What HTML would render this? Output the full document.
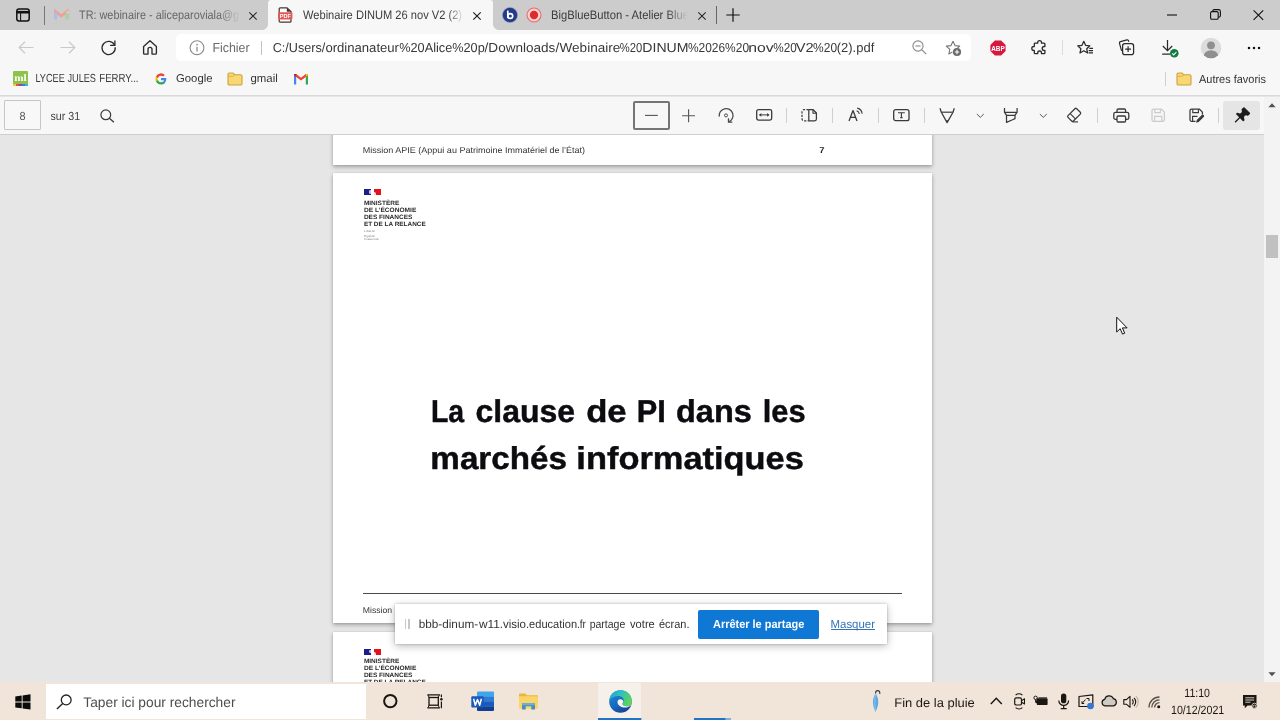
<!DOCTYPE html>
<html><head><meta charset="utf-8"><title>Webinaire DINUM 26 nov V2 (2).pdf</title>
<style>
*{box-sizing:border-box;margin:0;padding:0}
html,body{width:1280px;height:720px;overflow:hidden;background:#e6e6e6;font-family:"Liberation Sans",sans-serif;color:#222}
.abs{position:absolute}
svg{overflow:visible;will-change:transform}
#tabbar{position:absolute;left:0;top:0;width:1280px;height:30px;background:#cccccc}
#navbar{position:absolute;left:0;top:30px;width:1280px;height:36px;background:#f7f7f7}
#bookbar{position:absolute;left:0;top:66px;width:1280px;height:30.300px;background:#f7f7f7;border-bottom:1.300px solid #dadada}
#pdfbar{position:absolute;left:0;top:96.500px;width:1264px;height:38px;background:#f7f7f7;border-bottom:1px solid #cfcfcf}
#content{position:absolute;left:0;top:134.500px;width:1264px;height:547.500px;background:#e6e6e6;overflow:hidden}
#scroll{position:absolute;left:1264px;top:96.500px;width:16px;height:585.500px;background:#f3f3f3}
#taskbar{position:absolute;left:0;top:682px;width:1280px;height:38px;background:#f0e5d8}
.tx{overflow:visible;will-change:transform}
.tx text{font-family:"Liberation Sans",sans-serif;text-rendering:geometricPrecision;white-space:pre}
</style></head><body>
<div id="tabbar"></div>
<div class="abs" style="left:268px;top:0;width:225px;height:31px;background:#f7f7f7;border-radius:3px 3px 0 0"></div>
<div class="abs" style="left:262px;top:24px;width:6px;height:6px;background:radial-gradient(circle at 0 0,#cccccc 5.5px,#f7f7f7 6.5px)"></div>
<div class="abs" style="left:493px;top:24px;width:6px;height:6px;background:radial-gradient(circle at 100% 0,#cccccc 5.5px,#f7f7f7 6.5px)"></div>
<svg class="abs" style="left:15px;top:7px;" width="16" height="16" viewBox="0 0 16 16" fill="none"><rect x="1.8" y="2" width="12.4" height="12" rx="2.2" stroke="#111" stroke-width="1.5"/><path d="M1.8 5.2H14.2" stroke="#111" stroke-width="2.6"/><path d="M5.6 5V14" stroke="#1a1a1a" stroke-width="1.100"/></svg>
<div class="abs" style="left:44px;top:6px;width:1px;height:19px;background:#777"></div>
<svg class="abs" style="left:54px;top:9px;" width="15" height="11" viewBox="0 0 15 11" fill="none"><path d="M1.500 10.200V2.500L7.300 7 13.100 2.500V10.200" stroke="#eaa39c" stroke-width="2.900" fill="none"/><path d="M1.500 10.200V3.600" stroke="#a6c1ee" stroke-width="2.900"/><path d="M13.100 10.200V3.600" stroke="#a3d4b0" stroke-width="2.900"/><path d="M11.700 3.800L14.500 1.600V4z" fill="#f3dc9c"/></svg>
<div class="abs" style="left:79px;top:6px;width:163px;height:18px;overflow:hidden;-webkit-mask-image:linear-gradient(90deg,#000 86%,transparent 99%)"><svg class="abs tx" style="left:0px;top:-3px;" width="208" height="23"><text x="0.00" y="15.80" font-size="12.3" fill="#666" textLength="203.58" lengthAdjust="spacingAndGlyphs">TR: webinaire - aliceparoviala@gmail.com</text></svg></div>
<svg class="abs" style="left:248px;top:11px;" width="10" height="10" viewBox="0 0 10 10" fill="none"><path d="M1.3 1.3L8.7 8.7M8.7 1.3L1.3 8.7" stroke="#2a2a2a" stroke-width="1.100"/></svg>
<svg class="abs" style="left:278px;top:7px;" width="15" height="16" viewBox="0 0 15 16" fill="none"><path d="M2.200 .800H9l4 3.700V14.200a1 1 0 0 1-1 1H2.200a1 1 0 0 1-1-1V1.800a1 1 0 0 1 1-1z" fill="#fff" stroke="#4a3232" stroke-width="1.200"/><path d="M8.800 .900L13 4.700H8.800z" fill="#4a3232"/><rect x=".100" y="5.200" width="14.300" height="7.200" rx="1.300" fill="#df5855"/><text x="7.250" y="10.900" font-family="Liberation Sans" font-weight="700" font-size="5.600" fill="#fff" text-anchor="middle" textLength="11" lengthAdjust="spacingAndGlyphs">PDF</text></svg>
<div class="abs" style="left:303px;top:6px;width:161px;height:18px;overflow:hidden;-webkit-mask-image:linear-gradient(90deg,#000 90%,transparent 100%)"><svg class="abs tx" style="left:0px;top:-3px;" width="182" height="23"><text x="0.00" y="15.60" font-size="12.3" fill="#3c3c3c" textLength="177.58" lengthAdjust="spacingAndGlyphs">Webinaire DINUM 26 nov V2 (2).pdf</text></svg></div>
<svg class="abs" style="left:472px;top:11px;" width="10" height="10" viewBox="0 0 10 10" fill="none"><path d="M1.3 1.3L8.7 8.7M8.7 1.3L1.3 8.7" stroke="#1a1a1a" stroke-width="1.100"/></svg>
<svg class="abs" style="left:502px;top:7px;" width="16" height="16" viewBox="0 0 16 16" fill="none"><circle cx="8" cy="8" r="7.6" fill="#233a8a"/><circle cx="8" cy="8" r="7.6" stroke="#9aa3c6" stroke-width=".6"/><path d="M5.8 3.6V11.2" stroke="#fff" stroke-width="1.7"/><circle cx="8.3" cy="9" r="2.4" stroke="#fff" stroke-width="1.6"/></svg>
<svg class="abs" style="left:526px;top:7px;" width="16" height="16" viewBox="0 0 16 16" fill="none"><circle cx="8" cy="8" r="7" fill="#f6d3d3" stroke="#e86d6d" stroke-width="1.1"/><circle cx="8" cy="8" r="4.2" fill="#e02b2b"/></svg>
<div class="abs" style="left:551px;top:6px;width:138px;height:18px;overflow:hidden;-webkit-mask-image:linear-gradient(90deg,#000 84%,transparent 99%)"><svg class="abs tx" style="left:0px;top:-3px;" width="175" height="23"><text x="0.00" y="15.80" font-size="12.3" fill="#3a3a3a" textLength="170.43" lengthAdjust="spacingAndGlyphs">BigBlueButton - Atelier BlueButton</text></svg></div>
<svg class="abs" style="left:697px;top:11px;" width="10" height="10" viewBox="0 0 10 10" fill="none"><path d="M1.3 1.3L8.7 8.7M8.7 1.3L1.3 8.7" stroke="#2a2a2a" stroke-width="1.100"/></svg>
<div class="abs" style="left:716px;top:6px;width:1px;height:18px;background:#666"></div>
<svg class="abs" style="left:726px;top:8px;" width="14" height="14" viewBox="0 0 14 14" fill="none"><path d="M7 0.3V13.7M0.3 7H13.7" stroke="#111" stroke-width="1.2"/></svg>
<svg class="abs" style="left:1167px;top:14px;" width="10" height="2" viewBox="0 0 10 2" fill="none"><path d="M0 1H10" stroke="#111" stroke-width="1.1"/></svg>
<svg class="abs" style="left:1210px;top:9px;" width="11" height="11" viewBox="0 0 11 11" fill="none"><rect x=".6" y="2.6" width="7.6" height="7.6" rx="1.3" stroke="#111" stroke-width="1.1"/><path d="M2.8 2.4V2a1.4 1.4 0 0 1 1.4-1.4H8.6A1.8 1.8 0 0 1 10.4 2.4V6.6A1.4 1.4 0 0 1 9 8H8.4" stroke="#111" stroke-width="1.1"/></svg>
<svg class="abs" style="left:1253px;top:10px;" width="11" height="10" viewBox="0 0 11 10" fill="none"><path d="M.6.4L10.2 9.8M10.2.4L.6 9.8" stroke="#111" stroke-width="1.1"/></svg>
<div id="navbar"></div>
<svg class="abs" style="left:18px;top:41px;" width="16" height="13" viewBox="0 0 16 13" fill="none"><path d="M15.5 6.5H1.2M7 .8L1.2 6.5 7 12.2" stroke="#c9c9c9" stroke-width="1.2"/></svg>
<svg class="abs" style="left:60px;top:41px;" width="16" height="13" viewBox="0 0 16 13" fill="none"><path d="M.5 6.5H14.8M9 .8L14.8 6.5 9 12.2" stroke="#c9c9c9" stroke-width="1.2"/></svg>
<svg class="abs" style="left:100px;top:39px;" width="17" height="17" viewBox="0 0 17 17" fill="none"><path d="M14.500 5.900A6.600 6.600 0 1 0 15.200 8.200" stroke="#2b2b2b" stroke-width="1.3"/><path d="M14.9 1.6V6.4H10.1" stroke="#2b2b2b" stroke-width="1.3"/></svg>
<svg class="abs" style="left:142px;top:39px;" width="16" height="17" viewBox="0 0 16 17" fill="none"><path d="M1.6 7.6L8 1.7l6.4 5.9V14.2a.9.9 0 0 1-.9.9H10V10.3a2 2 0 0 0-4 0v4.8H2.5a.9.9 0 0 1-.9-.9z" stroke="#2b2b2b" stroke-width="1.35" stroke-linejoin="round"/></svg>
<div class="abs" style="left:176px;top:34px;width:795px;height:27px;background:#fff;border-radius:5px"></div>
<svg class="abs" style="left:189px;top:40px;" width="16" height="16" viewBox="0 0 16 16" fill="none"><circle cx="8" cy="7.7" r="6.9" stroke="#8b8b8b" stroke-width="1.1"/><path d="M8 6.8V11.4" stroke="#8b8b8b" stroke-width="1.3"/><circle cx="8" cy="4.6" r=".9" fill="#8b8b8b"/></svg>
<svg class="abs tx" style="left:212px;top:37px;" width="42" height="24"><text x="0.50" y="15.00" font-size="13" fill="#6a6a6a" textLength="37.10" lengthAdjust="spacingAndGlyphs">Fichier</text></svg>
<div class="abs" style="left:260.5px;top:41px;width:1.2px;height:14px;background:#c4c4c4"></div>
<svg class="abs tx" style="left:272px;top:37px;" width="58" height="24"><text x="0.67" y="15.00" font-size="13" fill="#383838" textLength="52.55" lengthAdjust="spacingAndGlyphs">C:/Users/</text></svg>
<svg class="abs tx" style="left:325px;top:37px;" width="78" height="24"><text x="0.43" y="15.00" font-size="13" fill="#383838" textLength="73.54" lengthAdjust="spacingAndGlyphs">ordinanateur</text></svg>
<svg class="abs tx" style="left:399px;top:37px;" width="90" height="24"><text x="0.26" y="15.00" font-size="13" fill="#383838" textLength="85.46" lengthAdjust="spacingAndGlyphs">%20Alice%20p</text></svg>
<svg class="abs tx" style="left:484px;top:37px;" width="80" height="24"><text x="0.62" y="15.00" font-size="13" fill="#383838" textLength="74.55" lengthAdjust="spacingAndGlyphs">/Downloads/</text></svg>
<svg class="abs tx" style="left:559px;top:37px;" width="66" height="24"><text x="0.53" y="15.00" font-size="13" fill="#383838" textLength="60.81" lengthAdjust="spacingAndGlyphs">Webinaire</text></svg>
<svg class="abs tx" style="left:619px;top:37px;" width="28" height="24"><text x="0.80" y="15.00" font-size="13" fill="#383838" textLength="22.44" lengthAdjust="spacingAndGlyphs">%20</text></svg>
<svg class="abs tx" style="left:642px;top:37px;" width="51" height="24"><text x="0.34" y="15.00" font-size="13" fill="#383838" textLength="46.15" lengthAdjust="spacingAndGlyphs">DINUM</text></svg>
<svg class="abs tx" style="left:687px;top:37px;" width="67" height="24"><text x="0.92" y="15.00" font-size="13" fill="#383838" textLength="61.12" lengthAdjust="spacingAndGlyphs">%2026%20</text></svg>
<svg class="abs tx" style="left:748px;top:37px;" width="30" height="24"><text x="0.21" y="15.00" font-size="13" fill="#383838" textLength="25.43" lengthAdjust="spacingAndGlyphs">nov</text></svg>
<svg class="abs tx" style="left:773px;top:37px;" width="28" height="24"><text x="0.35" y="15.00" font-size="13" fill="#383838" textLength="23.44" lengthAdjust="spacingAndGlyphs">%20</text></svg>
<svg class="abs tx" style="left:795px;top:37px;" width="23" height="24"><text x="0.80" y="15.00" font-size="13" fill="#383838" textLength="17.91" lengthAdjust="spacingAndGlyphs">V2</text></svg>
<svg class="abs tx" style="left:813px;top:37px;" width="29" height="24"><text x="0.11" y="15.00" font-size="13" fill="#383838" textLength="23.93" lengthAdjust="spacingAndGlyphs">%20</text></svg>
<svg class="abs tx" style="left:836px;top:37px;" width="43" height="24"><text x="0.74" y="15.00" font-size="13" fill="#383838" textLength="37.53" lengthAdjust="spacingAndGlyphs">(2).pdf</text></svg>
<svg class="abs" style="left:912px;top:40px;" width="15" height="15" viewBox="0 0 15 15" fill="none"><circle cx="6" cy="6" r="5.1" stroke="#8a8a8a" stroke-width="1.1"/><path d="M3.4 6H8.6" stroke="#8a8a8a" stroke-width="1.1"/><path d="M9.7 9.7L14.2 14.2" stroke="#8a8a8a" stroke-width="1.2"/></svg>
<svg class="abs" style="left:945px;top:40px;" width="17" height="17" viewBox="0 0 17 17" fill="none"><path d="M8 1.2l2 4.4 4.7.5-3.5 3.2.3 1" stroke="#777" stroke-width="1.1" stroke-linejoin="round"/><path d="M8 1.2L6 5.6l-4.7.5 3.5 3.2-1 4.7 3.6-2.1" stroke="#777" stroke-width="1.1" stroke-linejoin="round"/><circle cx="12" cy="12" r="4.1" fill="#6b6b6b"/><path d="M12 9.8v4.4M9.8 12h4.4" stroke="#fff" stroke-width="1.1"/></svg>
<svg class="abs" style="left:990px;top:40px;" width="16" height="16" viewBox="0 0 16 16" fill="none"><path d="M4.9.4h6.2l4.5 4.5v6.2l-4.5 4.5H4.9L.4 11.100V4.9z" fill="#d8173f"/><text x="8" y="10.700" font-family="Liberation Sans" font-weight="700" font-size="7.200" fill="#fff" text-anchor="middle" textLength="13.500" lengthAdjust="spacingAndGlyphs">ABP</text></svg>
<svg class="abs" style="left:1031px;top:39px;" width="16" height="17" viewBox="0 0 16 17" fill="none"><path d="M6.2 3.2a1.9 1.9 0 0 1 3.800 0v.7h2.600a.8.8 0 0 1 .8.8v2.500h-.8a1.900 1.900 0 0 0 0 3.800h.8v2.600a.8.8 0 0 1-.8.8H10v-.8a1.900 1.900 0 0 0-3.800 0v.8H3.600a.8.8 0 0 1-.8-.8V11h-.6a1.900 1.900 0 0 1 0-3.800h.6V4.700a.8.800 0 0 1 .8-.8h2.600z" stroke="#2b2b2b" stroke-width="1.300" stroke-linejoin="round" transform="translate(.5 .3)"/></svg>
<div class="abs" style="left:1061.500px;top:40px;width:1px;height:15px;background:#dcdcdc"></div>
<svg class="abs" style="left:1077px;top:40px;" width="17" height="16" viewBox="0 0 17 16" fill="none"><path d="M6.800 1.300l1.800 4 4.300.5-3.200 2.900.9 4.300-3.800-2.200-3.800 2.200.900-4.300L.7 5.800l4.300-.5z" stroke="#2b2b2b" stroke-width="1.250" stroke-linejoin="round"/><path d="M12.300 8.300H16M11.700 10.600H16M11.700 12.900H16" stroke="#2b2b2b" stroke-width="1.200"/></svg>
<svg class="abs" style="left:1118px;top:39px;" width="17" height="17" viewBox="0 0 17 17" fill="none"><path d="M3.600 11.800L1.500 4.300a1.400 1.400 0 0 1 1-1.700l6.400-1.700a1.400 1.400 0 0 1 1.700 1l.2.900" stroke="#2b2b2b" stroke-width="1.200"/><rect x="4.600" y="4.700" width="11" height="11" rx="2.200" stroke="#2b2b2b" stroke-width="1.250"/><path d="M10.100 7.300v5.800M7.200 10.200H13" stroke="#2b2b2b" stroke-width="1.200"/></svg>
<svg class="abs" style="left:1161px;top:39px;" width="20" height="19" viewBox="0 0 20 19" fill="none"><path d="M6.500 1v10.500M1.800 7l4.700 4.600L11.200 7M1.200 15h8" stroke="#2b2b2b" stroke-width="1.250"/><circle cx="13.300" cy="14.300" r="4.300" fill="#107c41"/><path d="M11.200 14.400l1.500 1.500 2.700-2.900" stroke="#fff" stroke-width="1.100"/></svg>
<svg class="abs" style="left:1200px;top:37px;" width="22" height="22" viewBox="0 0 22 22" fill="none"><defs><clipPath id="pc"><circle cx="11" cy="11" r="10.300"/></clipPath></defs><circle cx="11" cy="11" r="10.300" fill="#dcdcdc"/><g clip-path="url(#pc)"><circle cx="11" cy="8.300" r="3.900" fill="#8f8f8f"/><ellipse cx="11" cy="18.500" rx="7" ry="5.300" fill="#8f8f8f"/></g></svg>
<svg class="abs" style="left:1247px;top:46px;" width="14" height="4" viewBox="0 0 14 4" fill="none"><circle cx="2" cy="2" r="1.250" fill="#111"/><circle cx="7" cy="2" r="1.250" fill="#111"/><circle cx="12" cy="2" r="1.250" fill="#111"/></svg>
<div id="bookbar"></div>
<div class="abs" style="left:13px;top:71px;width:15px;height:15px;background:#8fc24b;border-radius:1px;overflow:hidden"><div style="position:absolute;left:0;bottom:0;width:15px;height:2.500px;background:linear-gradient(90deg,#f5c93a 0 20%,#e8532f 20% 40%,#8a4ab0 40% 60%,#3b7fd9 60% 80%,#35b8c9 80%)"></div></div>
<svg class="abs tx" style="left:14px;top:69px;" width="17" height="19"><text x="0.30" y="12.30" font-size="9.8" fill="#fff" font-weight="700" style="font-family:'Liberation Serif',serif" textLength="12.40" lengthAdjust="spacingAndGlyphs">ml</text></svg>
<svg class="abs tx" style="left:35px;top:68px;" width="34" height="22"><text x="0.45" y="14.40" font-size="11.7" fill="#3a3a3a" textLength="29.31" lengthAdjust="spacingAndGlyphs">LYCEE</text></svg>
<svg class="abs tx" style="left:67px;top:68px;" width="33" height="22"><text x="0.47" y="14.40" font-size="11.7" fill="#3a3a3a" textLength="28.50" lengthAdjust="spacingAndGlyphs">JULES</text></svg>
<svg class="abs tx" style="left:99px;top:68px;" width="44" height="22"><text x="0.25" y="14.40" font-size="11.7" fill="#3a3a3a" textLength="39.29" lengthAdjust="spacingAndGlyphs">FERRY...</text></svg>
<svg class="abs" style="left:155px;top:73px;" width="12" height="12" viewBox="0 0 12 12" fill="none"><path d="M11.300 6.100c0-.4 0-.8-.1-1.100H6v2.200h3a2.600 2.600 0 0 1-1.100 1.700v1.400h1.800a5.500 5.500 0 0 0 1.600-4.200z" fill="#4285f4"/><path d="M6 11.500c1.500 0 2.800-.5 3.700-1.300L7.900 8.800c-.5.300-1.100.5-1.900.5a3.300 3.300 0 0 1-3.100-2.300H1v1.500A5.500 5.500 0 0 0 6 11.500z" fill="#34a853"/><path d="M2.900 7a3.300 3.300 0 0 1 0-2.100V3.400H1a5.500 5.500 0 0 0 0 5z" fill="#fbbc05"/><path d="M6 2.700c.8 0 1.600.3 2.200.8l1.600-1.600A5.500 5.500 0 0 0 1 3.400l1.900 1.500A3.300 3.300 0 0 1 6 2.700z" fill="#ea4335"/></svg>
<svg class="abs tx" style="left:176px;top:68px;" width="41" height="21"><text x="0.00" y="14.40" font-size="11.3" fill="#333" textLength="36.50" lengthAdjust="spacingAndGlyphs">Google</text></svg>
<svg class="abs" style="left:227px;top:71.5px;" width="16" height="14" viewBox="0 0 16 14" fill="none"><path d="M1 2.300a1.300 1.300 0 0 1 1.300-1.300H6l1.600 1.700H13.700A1.300 1.300 0 0 1 15 4v7.700A1.300 1.300 0 0 1 13.700 13H2.300A1.300 1.300 0 0 1 1 11.700z" fill="#f7d875" stroke="#cfa236" stroke-width="1.100"/><path d="M1.200 4.300H6.300L7.700 2.800" stroke="#d9a93a" stroke-width=".8"/></svg>
<svg class="abs tx" style="left:250px;top:68px;" width="32" height="21"><text x="0.50" y="14.40" font-size="11.3" fill="#333" textLength="27.30" lengthAdjust="spacingAndGlyphs">gmail</text></svg>
<svg class="abs" style="left:293.5px;top:73.5px;" width="14" height="10.5" viewBox="0 0 14 10.5" fill="none"><path d="M0 10.500V1.200L2.200 0v10.500z" fill="#4285f4"/><path d="M14 10.500V1.200L11.800 0v10.500z" fill="#34a853"/><path d="M0 1.200L7 6.500 14 1.200V0l-2.200 0L7 3.700 2.200 0H0z" fill="#ea4335"/><path d="M0 1.200V0h2.200v2.900z" fill="#c5221f"/><path d="M14 1.200V0h-2.200v2.900z" fill="#fbbc04"/></svg>
<div class="abs" style="left:1165px;top:71.500px;width:1px;height:14px;background:#cfcfcf"></div>
<svg class="abs" style="left:1175.5px;top:71.5px;" width="16" height="14" viewBox="0 0 16 14" fill="none"><path d="M1 2.300a1.300 1.300 0 0 1 1.300-1.300H6l1.600 1.700H13.700A1.300 1.300 0 0 1 15 4v7.700A1.300 1.300 0 0 1 13.700 13H2.300A1.300 1.300 0 0 1 1 11.700z" fill="#f7d875" stroke="#cfa236" stroke-width="1.100"/><path d="M1.200 4.300H6.300L7.700 2.800" stroke="#d9a93a" stroke-width=".8"/></svg>
<svg class="abs tx" style="left:1199px;top:68px;" width="71" height="22"><text x="0.00" y="14.60" font-size="11.5" fill="#333" textLength="67.00" lengthAdjust="spacingAndGlyphs">Autres favoris</text></svg>
<div id="pdfbar"></div>
<div class="abs" style="left:4px;top:100px;width:36.500px;height:29.500px;border:1px solid #c6c6c6;border-radius:1px;background:#f8f8f8"></div>
<svg class="abs tx" style="left:19px;top:105px;" width="11" height="22"><text x="0.60" y="14.90" font-size="11.7" fill="#555" textLength="6.10" lengthAdjust="spacingAndGlyphs">8</text></svg>
<svg class="abs tx" style="left:50px;top:105px;" width="35" height="22"><text x="0.50" y="14.90" font-size="11.7" fill="#444" textLength="29.70" lengthAdjust="spacingAndGlyphs">sur 31</text></svg>
<svg class="abs" style="left:99.5px;top:108.5px;" width="15" height="14" viewBox="0 0 15 14" fill="none"><circle cx="5.800" cy="5.800" r="4.900" stroke="#3a3a3a" stroke-width="1.200"/><path d="M9.400 9.300L13.900 13.300" stroke="#3a3a3a" stroke-width="1.300"/></svg>
<div class="abs" style="left:633px;top:101px;width:36.500px;height:28.500px;border:2px solid #757575;border-radius:2px"></div>
<svg class="abs" style="left:645px;top:114px;" width="13" height="3" viewBox="0 0 13 3" fill="none"><path d="M0 1.400H12.800" stroke="#555" stroke-width="1.100"/></svg>
<svg class="abs" style="left:682px;top:108.5px;" width="14" height="14" viewBox="0 0 14 14" fill="none"><path d="M6.600 .300V13.200M.100 6.800H13" stroke="#555" stroke-width="1.100"/></svg>
<svg class="abs" style="left:718px;top:107px;" width="17" height="17" viewBox="0 0 17 17" fill="none"><path d="M1.300 9.600A6.900 6.900 0 1 1 10.900 14.800" stroke="#4a4a4a" stroke-width="1.250"/><path d="M10.500 11.300V15.200H14.300" stroke="#4a4a4a" stroke-width="1.300"/><circle cx="8" cy="8.400" r="1.500" stroke="#4a4a4a" stroke-width="1"/></svg>
<svg class="abs" style="left:756px;top:109px;" width="17" height="12" viewBox="0 0 17 12" fill="none"><rect x=".700" y=".700" width="15" height="10.400" rx="1.800" stroke="#3a3a3a" stroke-width="1.300"/><path d="M3.300 5.900H13.100" stroke="#3a3a3a" stroke-width="1"/><path d="M5.300 4l-2.200 1.900 2.200 1.900zM11.100 4l2.200 1.900-2.200 1.900z" fill="#3a3a3a"/></svg>
<div class="abs" style="left:786px;top:108px;width:1px;height:15px;background:#cfcfcf"></div>
<div class="abs" style="left:832.3px;top:108px;width:1px;height:15px;background:#cfcfcf"></div>
<div class="abs" style="left:878.3px;top:108px;width:1px;height:15px;background:#cfcfcf"></div>
<div class="abs" style="left:924.3px;top:108px;width:1px;height:15px;background:#cfcfcf"></div>
<div class="abs" style="left:1097.3px;top:108px;width:1px;height:15px;background:#cfcfcf"></div>
<div class="abs" style="left:1218px;top:108px;width:1px;height:15px;background:#cfcfcf"></div>
<svg class="abs" style="left:801px;top:109px;" width="17" height="13" viewBox="0 0 17 13" fill="none"><path d="M7.600 .700H3A2 2 0 0 0 1 2.700V9.800a2 2 0 0 0 2 2H7.600" stroke="#3a3a3a" stroke-width="1.200" stroke-dasharray="2.200 1.300"/><path d="M7.800 .700h4.400l3.200 3.300v6a1.800 1.800 0 0 1-1.800 1.800H7.800z" stroke="#3a3a3a" stroke-width="1.250" stroke-linejoin="round"/><path d="M12 .900V4.200H15.200" stroke="#3a3a3a" stroke-width="1.100"/></svg>
<svg class="abs" style="left:848px;top:107px;" width="17" height="15" viewBox="0 0 17 15" fill="none"><path d="M1 14L5 3.600 9 14M2.500 10.300H7.500" stroke="#3a3a3a" stroke-width="1.300" stroke-linejoin="round"/><path d="M8.600 3.800a3.600 3.600 0 0 1 2.700 3.200M9.200 1.100a6.200 6.200 0 0 1 4.900 5.600" stroke="#3a3a3a" stroke-width="1.100"/></svg>
<svg class="abs" style="left:893px;top:109px;" width="17" height="13" viewBox="0 0 17 13" fill="none"><rect x=".700" y=".700" width="15.300" height="11" rx="2" stroke="#3a3a3a" stroke-width="1.300"/><path d="M5 3.700H11.800M8.400 3.700V8.700M7 8.800H9.800" stroke="#3a3a3a" stroke-width="1.100"/></svg>
<svg class="abs" style="left:939px;top:107px;" width="17" height="17" viewBox="0 0 17 17" fill="none"><path d="M1 1.200L2.300 5.200 8.100 15.600 14 5.200 15.300 1.200" stroke="#3a3a3a" stroke-width="1.250" stroke-linejoin="round"/><path d="M2.400 5.200H13.900" stroke="#3a3a3a" stroke-width="1.200"/><path d="M6.900 13.300h2.400L8.100 15.600z" fill="#3a3a3a"/></svg>
<svg class="abs" style="left:975.5px;top:112.5px;" width="9" height="6" viewBox="0 0 9 6" fill="none"><path d="M.800 1L4.300 4.400 7.800 1" stroke="#555" stroke-width="1"/></svg>
<svg class="abs" style="left:1003px;top:107px;" width="16" height="17" viewBox="0 0 16 17" fill="none"><path d="M1.500 1V5.200L3.500 8.400V15.400L9.500 12.800 12 11.600V8.400L14.100 5.200V1" stroke="#3a3a3a" stroke-width="1.250" stroke-linejoin="round"/><path d="M1.800 5.300H13.900M3.500 8.400H12" stroke="#3a3a3a" stroke-width="1.150"/></svg>
<svg class="abs" style="left:1039px;top:112.5px;" width="9" height="6" viewBox="0 0 9 6" fill="none"><path d="M.800 1L4.300 4.400 7.800 1" stroke="#555" stroke-width="1"/></svg>
<svg class="abs" style="left:1066px;top:107px;" width="18" height="17" viewBox="0 0 18 17" fill="none"><path d="M10.300 1.500a1.300 1.300 0 0 1 1.800 0l3.600 3.600a1.300 1.300 0 0 1 0 1.800L8.800 13.800a1.300 1.300 0 0 1-1.800 0L3.400 10.200a1.300 1.300 0 0 1 0-1.800z" stroke="#3a3a3a" stroke-width="1.250" transform="translate(-1.400 .200)"/><path d="M4.500 6.900l4.900 4.900" stroke="#3a3a3a" stroke-width="1.150"/><path d="M6.300 14.900H12" stroke="#3a3a3a" stroke-width="1.150"/></svg>
<svg class="abs" style="left:1112.5px;top:107.5px;" width="17" height="15" viewBox="0 0 17 15" fill="none"><path d="M4 4.300V2.400A1.400 1.400 0 0 1 5.400 1H11.200A1.400 1.400 0 0 1 12.600 2.400V4.300" stroke="#3a3a3a" stroke-width="1.300"/><path d="M4 11.400H2.500A1.700 1.700 0 0 1 .800 9.700V6A1.700 1.700 0 0 1 2.500 4.300H14.100A1.700 1.700 0 0 1 15.800 6V9.700A1.700 1.700 0 0 1 14.100 11.400H12.600" stroke="#3a3a3a" stroke-width="1.300"/><rect x="4" y="8" width="8.600" height="6" rx="1.200" stroke="#3a3a3a" stroke-width="1.300"/></svg>
<svg class="abs" style="left:1151px;top:107.5px;" width="16" height="16" viewBox="0 0 16 16" fill="none"><path d="M1 2.600A1.600 1.600 0 0 1 2.600 1H10.300L13.400 4.100V11.800A1.600 1.600 0 0 1 11.800 13.400H2.600A1.600 1.600 0 0 1 1 11.800z" stroke="#cbcbcb" stroke-width="1.250" stroke-linejoin="round"/><path d="M3.800 1.200V4.600H9.400V1.200" stroke="#cbcbcb" stroke-width="1.150"/><path d="M3.600 13.200V8.300H10.800V13.200" stroke="#cbcbcb" stroke-width="1.150"/></svg>
<svg class="abs" style="left:1188.5px;top:107.5px;" width="16" height="16" viewBox="0 0 16 16" fill="none"><path d="M6.500 13.400H2.600A1.600 1.600 0 0 1 1 11.800V2.600A1.600 1.600 0 0 1 2.600 1H10.300L13.400 4.100V6.500" stroke="#3a3a3a" stroke-width="1.250" stroke-linejoin="round"/><path d="M3.800 1.200V4.600H9.400V1.200" stroke="#3a3a3a" stroke-width="1.150"/><path d="M3.600 13.200V8.300H8.500" stroke="#3a3a3a" stroke-width="1.150"/><path d="M7.100 14.700l.700-2.700 5-5a1.300 1.300 0 0 1 1.900 1.900l-5 5z" fill="#3a3a3a"/></svg>
<div class="abs" style="left:1223px;top:100.500px;width:37px;height:29px;background:#e5e5e5;border-radius:3px"></div>
<svg class="abs" style="left:1234px;top:106.5px;" width="16" height="16" viewBox="0 0 16 16" fill="none"><g transform="translate(1.100 15.200) rotate(-45)"><path d="M0 0H7" stroke="#1d1d1d" stroke-width="1.300"/><path d="M6.300 -4.800Q6.300 -5.300 6.900 -5.300H7.800Q8.400 -5.300 8.500 -4.700Q9.300 -2.400 11 -2.300Q12.800 -2.400 13.300 -4.100Q13.500 -4.600 14.100 -4.600H16.300Q17.100 -4.600 17.100 -3.800V3.800Q17.100 4.600 16.300 4.600H14.100Q13.500 4.600 13.300 4.100Q12.800 2.400 11 2.300Q9.300 2.400 8.500 4.700Q8.400 5.300 7.800 5.300H6.900Q6.300 5.300 6.300 4.800z" fill="#1d1d1d"/></g></svg>
<div id="content">
<div class="abs" style="left:333px;top:-10px;width:598.500px;height:40.600px;background:#fff;box-shadow:0 1.500px 4px rgba(0,0,0,.30),0 0 1px rgba(0,0,0,.2)"></div>
<div class="abs" style="left:333px;top:38.800px;width:598.500px;height:450px;background:#fff;box-shadow:0 1.500px 4px rgba(0,0,0,.30),0 0 1px rgba(0,0,0,.2)"></div>
<div class="abs" style="left:333px;top:497.800px;width:598.500px;height:100px;background:#fff;box-shadow:0 1.500px 4px rgba(0,0,0,.30),0 0 1px rgba(0,0,0,.2)"></div>
</div>
<svg class="abs tx" style="left:362px;top:142px;" width="227" height="17"><text x="0.80" y="11.10" font-size="8.5" fill="#333" textLength="222.20" lengthAdjust="spacingAndGlyphs">Mission APIE (Appui au Patrimoine Immatériel de l’État)</text></svg>
<svg class="abs tx" style="left:819px;top:142px;" width="10" height="17"><text x="0.30" y="11.10" font-size="8.5" fill="#222" font-weight="700" textLength="5.30" lengthAdjust="spacingAndGlyphs">7</text></svg>
<div class="abs" style="left:363.7px;top:189.2px;width:7.300px;height:6.300px;background:#1b1d8c"></div>
<div class="abs" style="left:373.9px;top:189.2px;width:7.300px;height:6.300px;background:#e1141d"></div>
<div class="abs" style="left:369.0px;top:190.39999999999998px;width:2.300px;height:3.400px;background:#fff;border-radius:1.200px 0 0 1.500px;opacity:.75"></div>
<div class="abs" style="left:373.4px;top:192.0px;width:3px;height:3.500px;background:#fff;border-radius:0 2px 0 0;opacity:.85"></div>
<svg class="abs tx" style="left:363px;top:196px;" width="41" height="14"><text x="0.90" y="9.10" font-size="6.3" fill="#2a2a2a" font-weight="700" textLength="35.40" lengthAdjust="spacingAndGlyphs">MINISTÈRE</text></svg>
<svg class="abs tx" style="left:363px;top:203px;" width="58" height="14"><text x="0.90" y="9.10" font-size="6.3" fill="#2a2a2a" font-weight="700" textLength="52.40" lengthAdjust="spacingAndGlyphs">DE L’ÉCONOMIE</text></svg>
<svg class="abs tx" style="left:363px;top:210px;" width="54" height="14"><text x="0.90" y="9.10" font-size="6.3" fill="#2a2a2a" font-weight="700" textLength="48.50" lengthAdjust="spacingAndGlyphs">DES FINANCES</text></svg>
<svg class="abs tx" style="left:363px;top:217px;" width="67" height="14"><text x="0.90" y="9.10" font-size="6.3" fill="#2a2a2a" font-weight="700" textLength="61.80" lengthAdjust="spacingAndGlyphs">ET DE LA RELANCE</text></svg>
<svg class="abs tx" style="left:364px;top:226px;" width="15" height="9"><text x="0.10" y="5.50" font-size="3.0" fill="#888" font-style="italic" textLength="10.50" lengthAdjust="spacingAndGlyphs">Liberté</text></svg>
<svg class="abs tx" style="left:364px;top:231px;" width="15" height="9"><text x="0.10" y="5.50" font-size="3.0" fill="#888" font-style="italic" textLength="10.50" lengthAdjust="spacingAndGlyphs">Égalité</text></svg>
<svg class="abs tx" style="left:364px;top:235px;" width="19" height="9"><text x="0.10" y="5.40" font-size="3.0" fill="#888" font-style="italic" textLength="14.50" lengthAdjust="spacingAndGlyphs">Fraternité</text></svg>
<svg class="abs tx" style="left:431px;top:388px;stroke:#0c0c10;stroke-width:.45px;" width="38" height="52"><text x="0.00" y="34.30" font-size="31.6" fill="#0c0c10" font-weight="700" textLength="33.16" lengthAdjust="spacingAndGlyphs">La</text></svg>
<svg class="abs tx" style="left:475px;top:388px;stroke:#0c0c10;stroke-width:.45px;" width="105" height="52"><text x="0.51" y="34.30" font-size="31.6" fill="#0c0c10" font-weight="700" textLength="99.64" lengthAdjust="spacingAndGlyphs">clause</text></svg>
<svg class="abs tx" style="left:586px;top:388px;stroke:#0c0c10;stroke-width:.45px;" width="45" height="52"><text x="0.17" y="34.30" font-size="31.6" fill="#0c0c10" font-weight="700" textLength="40.51" lengthAdjust="spacingAndGlyphs">de</text></svg>
<svg class="abs tx" style="left:636px;top:388px;stroke:#0c0c10;stroke-width:.45px;" width="34" height="52"><text x="0.65" y="34.30" font-size="31.6" fill="#0c0c10" font-weight="700" textLength="29.04" lengthAdjust="spacingAndGlyphs">PI</text></svg>
<svg class="abs tx" style="left:676px;top:388px;stroke:#0c0c10;stroke-width:.45px;" width="80" height="52"><text x="0.04" y="34.30" font-size="31.6" fill="#0c0c10" font-weight="700" textLength="75.79" lengthAdjust="spacingAndGlyphs">dans</text></svg>
<svg class="abs tx" style="left:762px;top:388px;stroke:#0c0c10;stroke-width:.45px;" width="48" height="52"><text x="0.71" y="34.30" font-size="31.6" fill="#0c0c10" font-weight="700" textLength="42.87" lengthAdjust="spacingAndGlyphs">les</text></svg>
<svg class="abs tx" style="left:430px;top:435px;stroke:#0c0c10;stroke-width:.45px;" width="141" height="52"><text x="0.37" y="34.30" font-size="31.6" fill="#0c0c10" font-weight="700" textLength="136.62" lengthAdjust="spacingAndGlyphs">marchés</text></svg>
<svg class="abs tx" style="left:576px;top:435px;stroke:#0c0c10;stroke-width:.45px;" width="232" height="52"><text x="0.35" y="34.30" font-size="31.6" fill="#0c0c10" font-weight="700" textLength="227.57" lengthAdjust="spacingAndGlyphs">informatiques</text></svg>
<div class="abs" style="left:363px;top:593px;width:538.500px;height:1.300px;background:#4a4a4a"></div>
<svg class="abs tx" style="left:362px;top:601px;" width="35" height="17"><text x="0.80" y="11.70" font-size="8.5" fill="#333" textLength="29.30" lengthAdjust="spacingAndGlyphs">Mission</text></svg>
<div class="abs" style="left:340px;top:640px;width:200px;height:43px;overflow:hidden"><div style="position:absolute;left:-340px;top:-640px"><div class="abs" style="left:363.7px;top:648.8px;width:7.300px;height:6.300px;background:#1b1d8c"></div>
<div class="abs" style="left:373.9px;top:648.8px;width:7.300px;height:6.300px;background:#e1141d"></div>
<div class="abs" style="left:369.0px;top:650.0px;width:2.300px;height:3.400px;background:#fff;border-radius:1.200px 0 0 1.500px;opacity:.75"></div>
<div class="abs" style="left:373.4px;top:651.5999999999999px;width:3px;height:3.500px;background:#fff;border-radius:0 2px 0 0;opacity:.85"></div>
<svg class="abs tx" style="left:363px;top:654px;" width="41" height="14"><text x="0.90" y="9.10" font-size="6.3" fill="#2a2a2a" font-weight="700" textLength="35.40" lengthAdjust="spacingAndGlyphs">MINISTÈRE</text></svg>
<svg class="abs tx" style="left:363px;top:661px;" width="58" height="14"><text x="0.90" y="9.10" font-size="6.3" fill="#2a2a2a" font-weight="700" textLength="52.40" lengthAdjust="spacingAndGlyphs">DE L’ÉCONOMIE</text></svg>
<svg class="abs tx" style="left:363px;top:668px;" width="54" height="14"><text x="0.90" y="9.10" font-size="6.3" fill="#2a2a2a" font-weight="700" textLength="48.50" lengthAdjust="spacingAndGlyphs">DES FINANCES</text></svg>
<svg class="abs tx" style="left:363px;top:675px;" width="67" height="14"><text x="0.90" y="9.10" font-size="6.3" fill="#2a2a2a" font-weight="700" textLength="61.80" lengthAdjust="spacingAndGlyphs">ET DE LA RELANCE</text></svg>
<svg class="abs tx" style="left:364px;top:686px;" width="15" height="9"><text x="0.10" y="5.10" font-size="3.0" fill="#888" font-style="italic" textLength="10.50" lengthAdjust="spacingAndGlyphs">Liberté</text></svg>
<svg class="abs tx" style="left:364px;top:691px;" width="15" height="9"><text x="0.10" y="5.10" font-size="3.0" fill="#888" font-style="italic" textLength="10.50" lengthAdjust="spacingAndGlyphs">Égalité</text></svg>
<svg class="abs tx" style="left:364px;top:695px;" width="19" height="9"><text x="0.10" y="5.00" font-size="3.0" fill="#888" font-style="italic" textLength="14.50" lengthAdjust="spacingAndGlyphs">Fraternité</text></svg></div></div>
<div class="abs" style="left:394.500px;top:604px;width:492px;height:40px;background:#fff;border-radius:0;box-shadow:0 2px 8px rgba(0,0,0,.28),0 0 2px rgba(0,0,0,.25)"></div>
<div class="abs" style="left:404.500px;top:619px;width:1.500px;height:9.500px;background:#c8c8c8"></div><div class="abs" style="left:408px;top:619px;width:1.500px;height:9.500px;background:#c8c8c8"></div>
<svg class="abs tx" style="left:418px;top:613px;" width="65" height="22"><text x="0.77" y="14.90" font-size="11.8" fill="#333" textLength="59.33" lengthAdjust="spacingAndGlyphs">bbb-dinum-</text></svg>
<svg class="abs tx" style="left:478px;top:613px;" width="26" height="22"><text x="0.94" y="14.90" font-size="11.8" fill="#333" textLength="20.97" lengthAdjust="spacingAndGlyphs">w11</text></svg>
<svg class="abs tx" style="left:499px;top:613px;" width="32" height="22"><text x="0.77" y="14.90" font-size="11.8" fill="#333" textLength="26.28" lengthAdjust="spacingAndGlyphs">.visio</text></svg>
<svg class="abs tx" style="left:526px;top:613px;" width="56" height="22"><text x="0.06" y="14.90" font-size="11.8" fill="#333" textLength="51.07" lengthAdjust="spacingAndGlyphs">.education</text></svg>
<svg class="abs tx" style="left:576px;top:613px;" width="14" height="22"><text x="0.93" y="14.90" font-size="11.8" fill="#333" textLength="8.97" lengthAdjust="spacingAndGlyphs">.fr</text></svg>
<svg class="abs tx" style="left:589px;top:613px;" width="41" height="22"><text x="0.63" y="14.90" font-size="11.8" fill="#333" textLength="35.67" lengthAdjust="spacingAndGlyphs">partage</text></svg>
<svg class="abs tx" style="left:630px;top:613px;" width="29" height="22"><text x="0.05" y="14.90" font-size="11.8" fill="#333" textLength="24.72" lengthAdjust="spacingAndGlyphs">votre</text></svg>
<svg class="abs tx" style="left:658px;top:613px;" width="36" height="22"><text x="0.93" y="14.90" font-size="11.8" fill="#333" textLength="30.53" lengthAdjust="spacingAndGlyphs">écran.</text></svg>
<div class="abs" style="left:698px;top:609.500px;width:121px;height:29.500px;background:#0f78d4;border-radius:2px"></div>
<svg class="abs tx" style="left:713px;top:614px;" width="96" height="22"><text x="0.00" y="14.00" font-size="11.8" fill="#fff" font-weight="700" textLength="91.30" lengthAdjust="spacingAndGlyphs">Arrêter le partage</text></svg>
<svg class="abs tx" style="left:830px;top:614px;" width="49" height="22"><text x="0.50" y="14.00" font-size="11.8" fill="#3572b8" textLength="44.50" lengthAdjust="spacingAndGlyphs">Masquer</text></svg>
<div class="abs" style="left:830.500px;top:629.300px;width:44.500px;height:1px;background:#3572b8"></div>
<svg class="abs" style="left:1115px;top:316px;" width="14" height="20" viewBox="0 0 14 20" fill="none"><path d="M1.700 1.200V16l3.500-3.300 2.300 5.400 2.200-.9-2.300-5.300h4.700z" fill="#fff" stroke="#111" stroke-width="1" stroke-linejoin="round"/></svg>
<div id="scroll"></div>
<div class="abs" style="left:1266px;top:235px;width:12px;height:22.500px;background:#c1c1c1"></div>
<svg class="abs" style="left:1268px;top:102.5px;" width="8" height="5" viewBox="0 0 8 5" fill="none"><path d="M4 .300L7.600 4.300H.400z" fill="#505050"/></svg>
<svg class="abs" style="left:1268px;top:671.5px;" width="8" height="5" viewBox="0 0 8 5" fill="none"><path d="M4 4.300L7.600 .300H.400z" fill="#505050"/></svg>
<div id="taskbar"></div>
<svg class="abs" style="left:14.5px;top:693.5px;" width="16" height="16" viewBox="0 0 16 16" fill="none"><path d="M.300 2.500L6.700 1.600V7.500H.300zM7.600 1.500L15.500 .300V7.500H7.600zM.300 8.400H6.700V14.300L.300 13.400zM7.600 8.400H15.500V15.600L7.600 14.400z" fill="#0b0b0b"/></svg>
<div class="abs" style="left:45.500px;top:684px;width:320.500px;height:35px;background:#fff"></div>
<svg class="abs" style="left:55.5px;top:693.5px;" width="17" height="16" viewBox="0 0 17 16" fill="none"><circle cx="10.200" cy="5.900" r="4.900" stroke="#222" stroke-width="1.300"/><path d="M6.700 9.500L.900 15" stroke="#222" stroke-width="1.400"/></svg>
<svg class="abs tx" style="left:83px;top:690px;" width="157" height="25"><text x="0.30" y="16.70" font-size="14" fill="#4d4d4d" textLength="152.20" lengthAdjust="spacingAndGlyphs">Taper ici pour rechercher</text></svg>
<svg class="abs" style="left:381.5px;top:693px;" width="17" height="17" viewBox="0 0 17 17" fill="none"><circle cx="8.300" cy="8.100" r="6.200" stroke="#1a1611" stroke-width="2"/></svg>
<svg class="abs" style="left:426.5px;top:693.5px;" width="16" height="15" viewBox="0 0 16 15" fill="none"><rect x="2" y="3.500" width="9.300" height="7.700" stroke="#1a1611" stroke-width="1.300"/><path d="M.400 .900H12.900M.400 13.800H12.900" stroke="#1a1611" stroke-width="1.300"/><path d="M1 1L2.200 3.500M12.300 1L11.100 3.500M1 13.700L2.200 11.200M12.300 13.700L11.100 11.200" stroke="#1a1611" stroke-width="1"/><circle cx="14.400" cy="5.300" r="1.250" fill="#1a1611"/><path d="M14.400 7.400V14.200M14.400 .400V3.300" stroke="#1a1611" stroke-width="1.200"/></svg>
<svg class="abs" style="left:471px;top:690.5px;" width="24" height="21" viewBox="0 0 24 21" fill="none"><rect x="6" y=".500" width="17" height="5.200" rx="1" fill="#41a5ee"/><rect x="6" y="5.500" width="17" height="5" fill="#2b7cd3"/><rect x="6" y="10.300" width="17" height="5" fill="#185abd"/><path d="M6 15.200H23V19a1 1 0 0 1-1 1H7a1 1 0 0 1-1-1z" fill="#103f91"/><rect x=".300" y="5.300" width="12.400" height="11.300" rx="1" fill="#185abd"/><path d="M2.600 7.800L4.300 14.200 6.500 8.400 8.700 14.200 10.400 7.800" stroke="#fff" stroke-width="1.500" stroke-linejoin="round"/></svg>
<svg class="abs" style="left:517.5px;top:692.5px;" width="21" height="18" viewBox="0 0 21 18" fill="none"><path d="M1 1.500a1 1 0 0 1 1-1h5.500l1.400 1.700H19a1 1 0 0 1 1 1V4H1z" fill="#e8b73b"/><rect x="1" y="3.200" width="19" height="12.500" rx="1" fill="#f9d567"/><path d="M4 16.600V11a1 1 0 0 1 1-1h11a1 1 0 0 1 1 1v5.600h-3.700v-3.300h-5.600v3.300z" fill="#4e8cb8"/><path d="M4 11a1 1 0 0 1 1-1h11a1 1 0 0 1 1 1v1.300H4z" fill="#6aaed9"/></svg>
<div class="abs" style="left:598px;top:683px;width:42.500px;height:37px;background:#f6f0ea"></div>
<svg class="abs" style="left:608.8px;top:689.7px;" width="23" height="23" viewBox="0 0 23 23" fill="none"><defs><linearGradient id="eg1" x1=".2" y1=".1" x2=".75" y2="1"><stop offset="0" stop-color="#1b86d2"/><stop offset=".55" stop-color="#1766bd"/><stop offset="1" stop-color="#123c8c"/></linearGradient><linearGradient id="eg2" x1="0" y1=".2" x2="1" y2=".6"><stop offset="0" stop-color="#1f9fd6"/><stop offset=".45" stop-color="#2fbfc4"/><stop offset=".8" stop-color="#4fd06a"/><stop offset="1" stop-color="#63d665"/></linearGradient><clipPath id="ec"><circle cx="11.500" cy="11.500" r="11.300"/></clipPath></defs><g clip-path="url(#ec)"><rect width="23" height="23" fill="url(#eg1)"/><path d="M-1 12C-.5 4 5 -1 12 -1C19 -1 24 4 24 11C24 14.500 21 16.300 17.800 16.300C15 16.300 13.300 15.200 13.400 13.900C13.500 12.900 14.700 12.300 14.700 10.300C14.700 7.800 12.300 6 9.300 6C5 6 1 8.500 -1 12z" fill="url(#eg2)"/><path d="M11.300 9.200C9.600 9.200 8.500 10.500 8.500 12C8.500 14.700 11 17 14.600 17.500C17.500 17.900 20 17 22 15.500L24 14.500V12.500C23 15 20.500 16.300 17.800 16.300C15 16.300 13.300 15.200 13.400 13.900C13.500 12.900 14.200 12.500 14.200 11.400C14.200 10.100 12.900 9.200 11.300 9.200z" fill="#f7f2ec"/></g></svg>
<div class="abs" style="left:598px;top:718px;width:42.500px;height:2px;background:#2273c3"></div>
<div class="abs" style="left:693.500px;top:718px;width:37.500px;height:2px;background:linear-gradient(90deg,#2273c3 84%,#7fb0e0 86%)"></div>
<div class="abs" style="left:640.500px;top:718px;width:1.500px;height:2px;background:#9bbfe4"></div>
<svg class="abs" style="left:871px;top:690px;" width="11" height="23" viewBox="0 0 11 23" fill="none"><path d="M4.600 3.500C2 7.500 .300 13.500 4.500 21.900C8.900 13.500 7.300 7.500 4.600 3.500z" fill="#5aa7e6"/><path d="M4.600 3.800V2.700a2.100 2.100 0 0 1 4.200 0v1.300" stroke="#3c3c3c" stroke-width="1.100"/><path d="M4.600 3.500C3.700 9 3.700 15 4.500 21.900" stroke="#94c8f3" stroke-width=".900"/></svg>
<svg class="abs tx" style="left:894px;top:691px;" width="85" height="23"><text x="0.30" y="15.50" font-size="12.5" fill="#1c1712" textLength="80.50" lengthAdjust="spacingAndGlyphs">Fin de la pluie</text></svg>
<svg class="abs" style="left:990px;top:697px;" width="13" height="8" viewBox="0 0 13 8" fill="none"><path d="M.800 7L6.300 1.300 11.800 7" stroke="#1a1611" stroke-width="1.400"/></svg>
<svg class="abs" style="left:1013.5px;top:692.5px;" width="12" height="17" viewBox="0 0 12 17" fill="none"><rect x=".700" y="4.800" width="6.800" height="7.200" rx="1.600" stroke="#1a1611" stroke-width="1.200"/><path d="M7.700 7.600L10.500 5.800V11L7.700 9.200" stroke="#1a1611" stroke-width="1.100" stroke-linejoin="round"/><path d="M1.600 2.200A5 5 0 0 1 8.400 2.200M1.600 14.600A5 5 0 0 0 8.400 14.600" stroke="#1a1611" stroke-width="1.100"/></svg>
<svg class="abs" style="left:1033px;top:695px;" width="16" height="12" viewBox="0 0 16 12" fill="none"><rect x="3.800" y="3.300" width="10.800" height="6.800" rx=".800" fill="#1a1611"/><rect x="2.900" y="5.300" width="1.200" height="2.800" fill="#1a1611"/><circle cx="2.600" cy="2.800" r="1.700" stroke="#1a1611" stroke-width="1"/><path d="M2.600 4.500V7.500" stroke="#1a1611" stroke-width="1"/><path d="M5.500 2.800h8.500" stroke="#1a1611" stroke-width=".9"/></svg>
<svg class="abs" style="left:1057.5px;top:693px;" width="12" height="17" viewBox="0 0 12 17" fill="none"><rect x="3" y=".500" width="5.300" height="9.800" rx="2.600" fill="#1a1611"/><path d="M.800 7.500a4.900 4.900 0 0 0 9.800 0M5.700 12.400V15.500M2.700 15.700H8.700" stroke="#1a1611" stroke-width="1.200"/></svg>
<svg class="abs" style="left:1077.5px;top:693.5px;" width="18" height="16" viewBox="0 0 18 16" fill="none"><path d="M1 2.500L14.800 .800V12.500H1z" stroke="#1a1611" stroke-width="1.200" stroke-linejoin="round"/><path d="M4 9.500L7.500 5.500M4 9.500V7.300M4 9.500H6.200M8.500 4.500h2.500v2.500" stroke="#1a1611" stroke-width="1"/><circle cx="12.500" cy="12" r="3.300" fill="#3478d4"/></svg>
<svg class="abs" style="left:1100.5px;top:695px;" width="17" height="12" viewBox="0 0 17 12" fill="none"><path d="M4 10.800a3.300 3.300 0 0 1-.300-6.500A4.600 4.600 0 0 1 12.300 3.600 3.700 3.700 0 0 1 12.700 10.800z" stroke="#1a1611" stroke-width="1.200" fill="#cfcac4"/></svg>
<svg class="abs" style="left:1122.5px;top:694.5px;" width="16" height="14" viewBox="0 0 16 14" fill="none"><path d="M.800 4.600H3.400L7 1.300V12.300L3.400 9.200H.800z" stroke="#1a1611" stroke-width="1.100" stroke-linejoin="round"/><path d="M9.200 4.500a3.300 3.300 0 0 1 0 4.800M11 2.800a5.800 5.800 0 0 1 0 8.200" stroke="#1a1611" stroke-width="1.100"/><path d="M12.900 1.200a8.200 8.200 0 0 1 0 11.400" stroke="#b9b2a8" stroke-width="1.100"/></svg>
<svg class="abs" style="left:1148px;top:695.5px;" width="13" height="13" viewBox="0 0 13 13" fill="none"><path d="M1 11.500A10.500 10.500 0 0 1 11.500 1M3.800 11.500A7.700 7.700 0 0 1 11.500 3.800M6.600 11.500A4.900 4.900 0 0 1 11.500 6.600" stroke="#554f47" stroke-width="1.300"/><circle cx="10.700" cy="10.700" r="1.500" fill="#1a1611"/></svg>
<svg class="abs tx" style="left:1184px;top:683px;" width="30" height="22"><text x="0.30" y="14.00" font-size="12" fill="#1c1712" textLength="25.70" lengthAdjust="spacingAndGlyphs">11:10</text></svg>
<svg class="abs tx" style="left:1171px;top:699px;" width="58" height="22"><text x="0.00" y="14.70" font-size="12" fill="#1c1712" textLength="53.30" lengthAdjust="spacingAndGlyphs">10/12/2021</text></svg>
<svg class="abs" style="left:1241.5px;top:693.5px;" width="17" height="16" viewBox="0 0 17 16" fill="none"><path d="M1 1H14.500V11.500H5.500L2.800 14.200V11.500H1z" fill="#1a1611"/><path d="M3.300 3.800H12.200M3.300 6H12.200M3.300 8.200H8.500" stroke="#efe4d6" stroke-width=".9"/><circle cx="12.500" cy="11.800" r="2.600" fill="#1a1611" stroke="#efe4d6" stroke-width=".8"/><path d="M11.300 12.800a1.300 1.300 0 1 1 1.200.8" stroke="#efe4d6" stroke-width=".7"/></svg>
</body></html>
